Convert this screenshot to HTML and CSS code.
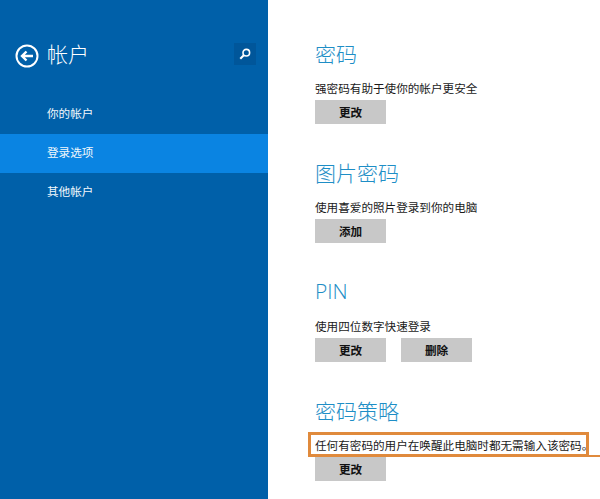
FILE: index.html
```html
<!DOCTYPE html>
<html lang="zh-CN">
<head>
<meta charset="utf-8">
<title>帐户</title>
<link rel="stylesheet" href="styles.css">
</head>
<body>
<div class="page">
  <aside class="sidebar">
    <header class="side-head">
      <svg class="back" width="24" height="24" viewBox="0 0 24 24" fill="none" stroke="#fff">
        <circle cx="12" cy="12" r="10.5" stroke-width="2"/>
        <path d="M18 12H7M11.5 7.5L7 12l4.500 4.500" stroke-width="2.400"/>
      </svg>
      <h1 class="side-title">帐户</h1>
      <div class="search">
        <svg width="12" height="12" viewBox="0 0 12 12" fill="none" stroke="#fff">
          <circle cx="7.300" cy="4.700" r="3.300" stroke-width="1.600"/>
          <path d="M4.800 7.200L1.300 10.700" stroke-width="2"/>
        </svg>
      </div>
    </header>
    <nav class="nav">
      <a class="nav-item">你的帐户</a>
      <a class="nav-item active">登录选项</a>
      <a class="nav-item">其他帐户</a>
    </nav>
  </aside>
  <main class="content">
    <section class="group first">
      <h2 class="heading">密码</h2>
      <p class="desc">强密码有助于使你的帐户更安全</p>
      <div class="actions"><button class="btn">更改</button></div>
    </section>
    <section class="group">
      <h2 class="heading">图片密码</h2>
      <p class="desc">使用喜爱的照片登录到你的电脑</p>
      <div class="actions"><button class="btn">添加</button></div>
    </section>
    <section class="group">
      <h2 class="heading latin">PIN</h2>
      <p class="desc">使用四位数字快速登录</p>
      <div class="actions"><button class="btn">更改</button><button class="btn">删除</button></div>
    </section>
    <section class="group">
      <h2 class="heading">密码策略</h2>
      <p class="desc">任何有密码的用户在唤醒此电脑时都无需输入该密码。</p>
      <div class="actions"><button class="btn">更改</button></div>
    </section>
  </main>
  <div class="callout"></div>
  <div class="callout-line"></div>
</div>
</body>
</html>
```
FILE: styles.css
```css
* { box-sizing: border-box; }
html, body { margin: 0; height: 100%; }
body {
  background: #fff;
  overflow: hidden;
  font-family: "Noto Sans CJK SC", "Noto Sans", sans-serif;
}
.page {
  position: relative;
  display: flex;
  width: 600px;
  height: 499px;
  overflow: hidden;
}
.sidebar {
  width: 268px;
  flex: none;
  background: #0060a9;
  color: #fff;
}
.side-head {
  display: flex;
  align-items: center;
  height: 44px;
  margin-top: 34px;
  padding: 0 12px 0 15px;
}
.back { flex: none; }
.side-title {
  margin: 0 0 7px 8px;
  font-size: 21px;
  font-weight: 300;
  line-height: 30px;
}
.search {
  display: flex;
  align-items: center;
  justify-content: center;
  width: 22px;
  height: 22px;
  margin: 0 0 4px auto;
  background: #00569a;
}
.nav {
  display: flex;
  flex-direction: column;
  margin-top: 17px;
}
.nav-item {
  display: flex;
  align-items: center;
  height: 39px;
  padding: 0 0 4px 47px;
  font-size: 11.600px;
  font-weight: 400;
  color: #f2f8fc;
}
.nav-item.active { background: #0a84e2; }
.content {
  flex: 1;
  padding: 38px 0 0 47px;
}
.group { margin-top: 33px; }
.group.first { margin-top: 0; }
.heading {
  margin: 0;
  font-size: 21px;
  font-weight: 300;
  line-height: 30px;
  color: #1e8ec6;
}
.heading.latin {
  font-family: "Open Sans", "Noto Sans", sans-serif;
  font-weight: 300;
}
.desc {
  margin: 11px 0 0;
  font-size: 11.600px;
  line-height: 18px;
  color: #1a1a1a;
  white-space: nowrap;
}
.actions {
  display: flex;
  gap: 15px;
  margin-top: 3px;
}
.btn {
  width: 71px;
  height: 24px;
  padding: 0;
  border: 0;
  background: #c8c8c8;
  color: #111;
  font-family: inherit;
  font-size: 11.600px;
  font-weight: 700;
}
.callout {
  position: absolute;
  left: 308px;
  top: 432px;
  width: 281px;
  height: 25px;
  border: 3px solid #e08a3c;
}
.callout-line {
  position: absolute;
  left: 589px;
  top: 455px;
  width: 11px;
  height: 2px;
  background: #e08a3c;
}
```
